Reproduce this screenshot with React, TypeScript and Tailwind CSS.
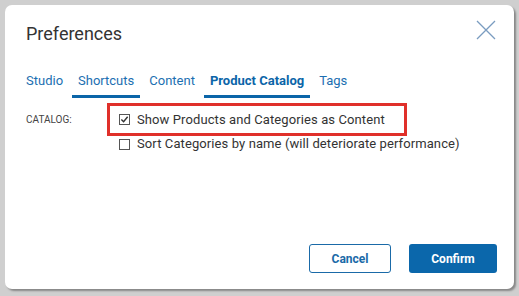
import React from "react";

function Check({ checked }: { checked: boolean }) {
  return (
    <span className="relative inline-flex h-[11px] w-[11px] shrink-0 items-center justify-center border border-[#555] bg-white">
      {checked && (
        <svg viewBox="0 0 10 10" className="h-[9px] w-[9px]">
          <path d="M1.5 5 L4 7.5 L8.5 2" fill="none" stroke="#333" strokeWidth="1.6" />
        </svg>
      )}
    </span>
  );
}

export default function App() {
  const tabs = ["Studio", "Shortcuts", "Content", "Product Catalog", "Tags"];
  return (
    <div
      className="h-[296px] w-[519px] bg-[#cfcfcf] p-[5px] pb-[7px] pr-[5px]"
      style={{ fontFamily: "Roboto, 'Noto Sans', sans-serif" }}
    >
      <div className="flex h-[284px] w-[509px] flex-col rounded-[7px] bg-white shadow-[2px_2px_2px_rgba(0,0,0,0.35)]">
        <div className="flex items-start justify-between pl-[21px] pr-[18px] pt-[18px]">
          <div className="text-[18px] leading-[22px] text-[#333]">Preferences</div>
          <svg viewBox="0 0 20 20" className="mt-[-3px] h-[20px] w-[20px]">
            <path d="M1 1 L19 19 M19 1 L1 19" stroke="#7a9cc0" strokeWidth="1.3" fill="none" />
          </svg>
        </div>
        <div className="mt-[28px] flex gap-[3px] pl-[15px] text-[13px] text-[#1c6fb1]">
          {tabs.map((t, i) => {
            const active = i === 1 || i === 3;
            return (
              <div
                key={t}
                className={
                  "flex h-[25px] items-start border-b-[3px] px-[6px] leading-[15px] " +
                  (active ? "border-[#0b65a8]" : "border-transparent") +
                  (i === 3 ? " font-bold text-[#0b65a8]" : "")
                }
              >
                {t}
              </div>
            );
          })}
        </div>
        <div className="mt-[5px] flex pl-[21px]">
          <div className="w-[81px] pt-[11px] text-[10px] leading-[12px] text-[#444]">CATALOG:</div>
          <div className="flex flex-col">
            <div className="flex h-[33px] w-[300px] items-center gap-[7px] border-[3px] border-[#e0302a] pl-[9px] text-[13px] text-[#333]">
              <Check checked />
              <span className="tracking-[0.1px]">Show Products and Categories as Content</span>
            </div>
            <div className="flex h-[16px] items-center gap-[7px] pl-[12px] text-[13px] text-[#333]">
              <Check checked={false} />
              <span className="tracking-[0.1px]">Sort Categories by name (will deteriorate performance)</span>
            </div>
          </div>
        </div>
        <div className="mt-auto flex justify-end gap-[18px] pb-[16px] pr-[17px]">
          <button className="h-[29px] w-[82px] rounded-[3px] border border-[#1a6aa8] bg-white text-[12px] font-bold text-[#1a6aa8]">
            Cancel
          </button>
          <button className="h-[29px] w-[88px] rounded-[3px] bg-[#0b67ab] text-[12px] font-bold text-white">
            Confirm
          </button>
        </div>
      </div>
    </div>
  );
}
